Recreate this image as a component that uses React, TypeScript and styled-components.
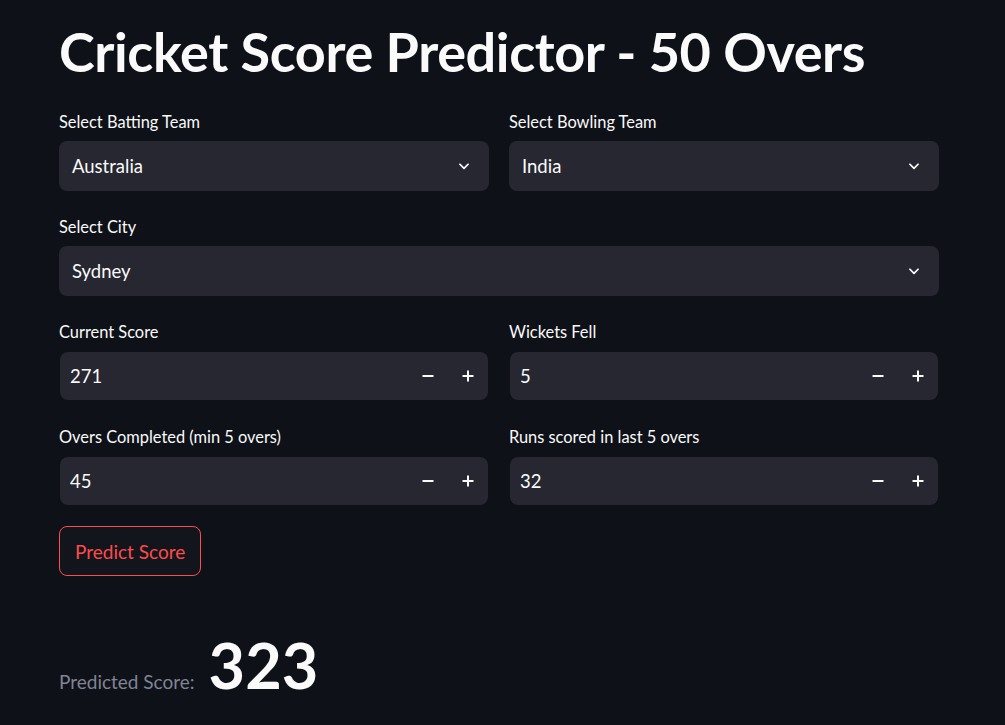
import React from "react";
import styled, { createGlobalStyle } from "styled-components";

const GlobalStyle = createGlobalStyle`
  html, body {
    margin: 0;
    padding: 0;
    background: #0e1117;
  }
  * {
    box-sizing: border-box;
  }
`;

const font = `"Lato", "Open Sans", sans-serif`;

const Page = styled.main`
  min-height: 725px;
  background: #0e1117;
  color: #fafafa;
  font-family: ${font};
`;

const Container = styled.div`
  width: 880px;
  margin-left: 59px;
  padding-top: 20px;
`;

const Title = styled.h1`
  margin: 0 0 27px;
  font-size: 54px;
  line-height: 64px;
  font-weight: 700;
  letter-spacing: -0.4px;
`;

const Grid = styled.div`
  display: grid;
  grid-template-columns: 1fr 1fr;
  column-gap: 20px;
  row-gap: 25px;
`;

const Field = styled.div<{ $full?: boolean }>`
  grid-column: ${(p) => (p.$full ? "1 / -1" : "auto")};
  display: flex;
  flex-direction: column;
`;

const Label = styled.label`
  font-size: 16.4px;
  line-height: 22px;
  margin-bottom: 8px;
`;

const SelectBox = styled.div`
  height: 50px;
  border-radius: 8px;
  background: #262730;
  display: flex;
  align-items: center;
  justify-content: space-between;
  padding: 0 18px 0 13px;
  font-size: 18.5px;
`;

const NumberBox = styled.div`
  height: 50px;
  padding: 1px;
  border-radius: 8px;
  background: #0e1117;
`;

const NumberInner = styled.div`
  height: 48px;
  border-radius: 8px;
  background: #262730;
  display: flex;
  align-items: center;
  padding-left: 10px;
  font-size: 18.5px;
`;

const Value = styled.span`
  flex: 1;
`;

const Step = styled.button`
  width: 40px;
  height: 48px;
  border: none;
  background: transparent;
  color: #fafafa;
  display: flex;
  align-items: center;
  justify-content: center;
  padding: 0;
`;

const PredictButton = styled.button`
  margin-top: 20px;
  height: 50px;
  padding: 0 15px;
  border: 1px solid #ff4b4b;
  border-radius: 8px;
  background: #12151c;
  color: #ff4b4b;
  font-family: ${font};
  font-size: 19px;
`;

const Result = styled.div`
  display: flex;
  align-items: baseline;
  gap: 14px;
  margin-top: 54px;
`;

const ResultLabel = styled.span`
  font-size: 19px;
  color: #808495;
`;

const ResultValue = styled.span`
  font-size: 63px;
  font-weight: 700;
  line-height: 70px;
`;

const Chevron = () => (
  <svg width="14" height="14" viewBox="0 0 24 24" fill="none" stroke="#fafafa" strokeWidth="3" strokeLinecap="round" strokeLinejoin="round">
    <path d="M5 9l7 7 7-7" />
  </svg>
);

const Minus = () => (
  <svg width="12" height="12" viewBox="0 0 12 12">
    <rect x="0.5" y="5" width="11" height="2" fill="#fafafa" />
  </svg>
);

const Plus = () => (
  <svg width="12" height="12" viewBox="0 0 12 12">
    <rect x="0.5" y="5" width="11" height="2" fill="#fafafa" />
    <rect x="5" y="0.5" width="2" height="11" fill="#fafafa" />
  </svg>
);

const Select = ({ label, value, full }: { label: string; value: string; full?: boolean }) => (
  <Field $full={full}>
    <Label>{label}</Label>
    <SelectBox>
      <span>{value}</span>
      <Chevron />
    </SelectBox>
  </Field>
);

const NumberInput = ({ label, value }: { label: string; value: number }) => (
  <Field>
    <Label>{label}</Label>
    <NumberBox>
      <NumberInner>
        <Value>{value}</Value>
        <Step>
          <Minus />
        </Step>
        <Step>
          <Plus />
        </Step>
      </NumberInner>
    </NumberBox>
  </Field>
);

export default function App() {
  return (
    <Page>
      <GlobalStyle />
      <Container>
        <Title>Cricket Score Predictor - 50 Overs</Title>
        <Grid>
          <Select label="Select Batting Team" value="Australia" />
          <Select label="Select Bowling Team" value="India" />
          <Select label="Select City" value="Sydney" full />
          <NumberInput label="Current Score" value={271} />
          <NumberInput label="Wickets Fell" value={5} />
          <NumberInput label="Overs Completed (min 5 overs)" value={45} />
          <NumberInput label="Runs scored in last 5 overs" value={32} />
        </Grid>
        <PredictButton>Predict Score</PredictButton>
        <Result>
          <ResultLabel>Predicted Score:</ResultLabel>
          <ResultValue>323</ResultValue>
        </Result>
      </Container>
    </Page>
  );
}
